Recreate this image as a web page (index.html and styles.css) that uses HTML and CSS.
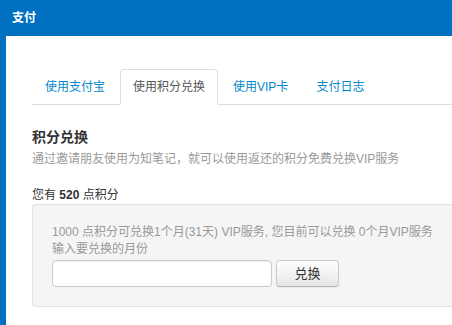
FILE: index.html
```html
<!DOCTYPE html>
<html lang="zh-CN">
  <head>
    <meta charset="UTF-8" />
    <meta name="viewport" content="width=device-width, initial-scale=1.0" />
    <title>支付</title>

    <link rel="stylesheet" href="styles.css">
  </head>
  <body>
    <div class="header">支付</div>

    <div class="frame">
      <ul class="tabs">
        <li><a href="#">使用支付宝</a></li>
        <li class="active"><a href="#">使用积分兑换</a></li>
        <li><a href="#">使用VIP卡</a></li>
        <li><a href="#">支付日志</a></li>
      </ul>

      <h4>积分兑换</h4>
      <p class="desc">通过邀请朋友使用为知笔记，就可以使用返还的积分免费兑换VIP服务</p>
      <p class="points">您有 <b>520</b> 点积分</p>

      <div class="well">
        <p>1000 点积分可兑换1个月(31天) VIP服务, 您目前可以兑换 0个月VIP服务</p>
        <label for="months">输入要兑换的月份</label>
        <div class="row">
          <input id="months" type="text" />
          <button type="button">兑换</button>
        </div>
      </div>
    </div>
  </body>
</html>
```

FILE: styles.css
```css
*,
*::before,
*::after {
  box-sizing: border-box;
  margin: 0;
  padding: 0;
}

html,
body {
  height: 100%;
  overflow: hidden;
}

body {
  font-family: "Liberation Sans", "Noto Sans CJK SC", sans-serif;
  font-size: 12px;
  line-height: 18px;
  color: #333;
  background: #fff;
}

.header {
  height: 36px;
  line-height: 36px;
  padding-left: 12px;
  background: #0071c1;
  color: #fff;
  font-weight: bold;
}

.frame {
  height: calc(100% - 36px);
  border-left: 6px solid #0071c1;
  padding: 33px 0 0 26px;
}

.tabs {
  display: flex;
  list-style: none;
  border-bottom: 1px solid #ddd;
}

.tabs li {
  margin-right: 2px;
  margin-bottom: -1px;
}

.tabs a {
  display: block;
  padding: 8px 12px;
  line-height: 18px;
  border: 1px solid transparent;
  border-radius: 4px 4px 0 0;
  color: #0088cc;
  text-decoration: none;
}

.tabs .active a {
  color: #555;
  background: #fff;
  border-color: #ddd #ddd transparent;
}

h4 {
  margin: 22px 0 3px;
  font-size: 14px;
  line-height: 20px;
}

.desc {
  color: #999;
  margin-bottom: 18px;
}

/* the well runs on past the right edge of the window */
.well {
  padding: 19px;
  background: #f5f5f5;
  border: 1px solid #e3e3e3;
  border-right: none;
  border-radius: 4px 0 0 4px;
  color: #999;
}

.well p,
.well label {
  display: block;
  line-height: 17px;
}

.well label {
  margin-bottom: 2px;
}

.row {
  display: flex;
  gap: 4px;
}

.row input {
  width: 220px;
  height: 27px;
  padding: 4px 6px;
  border: 1px solid #ccc;
  border-radius: 4px;
  background: #fff;
  box-shadow: inset 0 1px 1px rgba(0, 0, 0, 0.075);
  font: inherit;
}

.row button {
  width: 63px;
  height: 27px;
  border: 1px solid #ccc;
  border-bottom-color: #b3b3b3;
  border-radius: 4px;
  background: linear-gradient(#fff, #e6e6e6);
  box-shadow: inset 0 1px 0 rgba(255, 255, 255, 0.2), 0 1px 2px rgba(0, 0, 0, 0.05);
  color: #333;
  font: inherit;
  font-size: 13px;
}
```
